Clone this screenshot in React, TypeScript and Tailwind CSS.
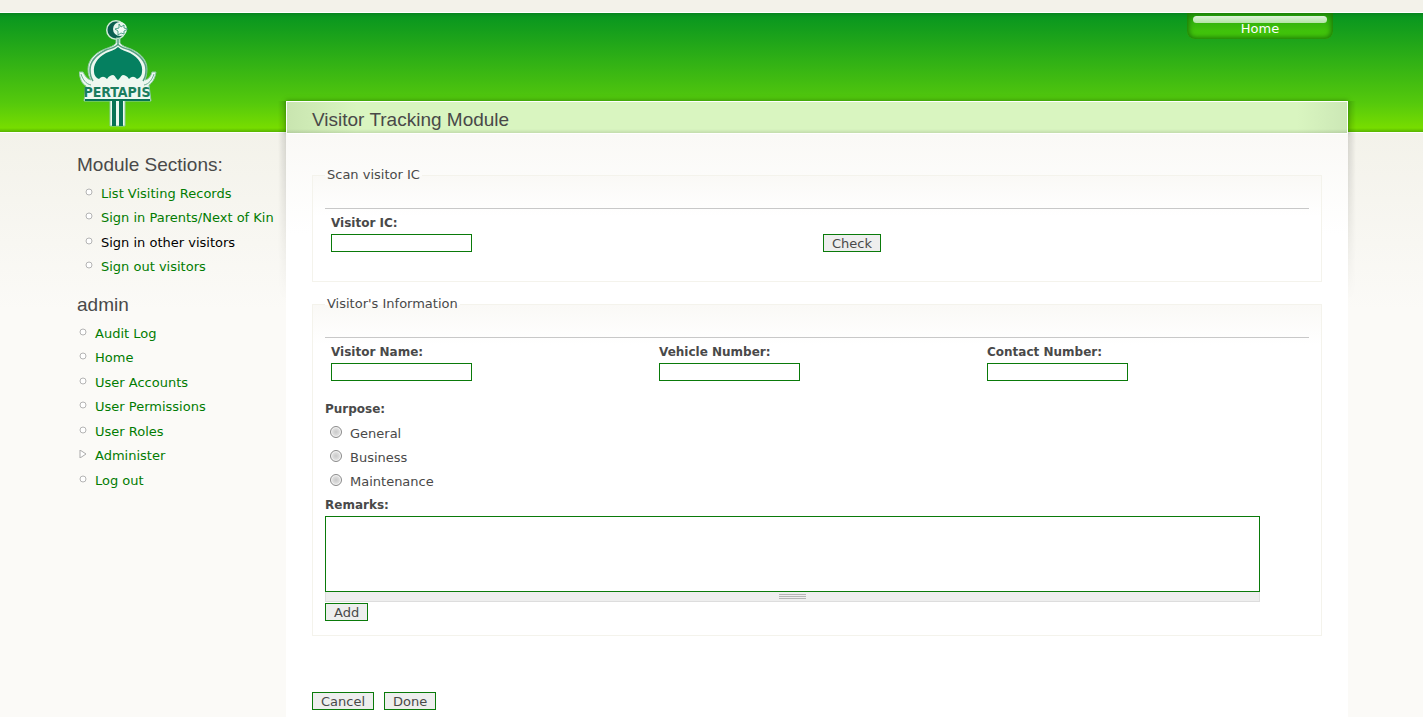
import type { ReactNode } from "react";

const sections = [
  { label: "List Visiting Records" },
  { label: "Sign in Parents/Next of Kin" },
  { label: "Sign in other visitors", active: true },
  { label: "Sign out visitors" },
];

const adminLinks = [
  { label: "Audit Log" },
  { label: "Home" },
  { label: "User Accounts" },
  { label: "User Permissions" },
  { label: "User Roles" },
  { label: "Administer", collapsed: true },
  { label: "Log out" },
];

const purposes = ["General", "Business", "Maintenance"];

type MenuItem = { label: string; active?: boolean; collapsed?: boolean };

const Logo = () => (
  <svg width="80" height="110" viewBox="0 0 80 110" role="img" aria-label="Pertapis">
    {/* crescent and star */}
    <circle cx="37" cy="11" r="10" fill="#d3ecd8" />
    <circle cx="37" cy="11" r="8.5" fill="#0b5f50" />
    <circle cx="41" cy="10" r="7" fill="#e8f6ee" />
    <path
      d="M40 5l2 3 3-2 0 3 4 1-4 2 0 3-3-1-3 2 0-4-3-2 4-1z"
      fill="#f4fbf7"
      stroke="#2b8f70"
      strokeWidth="0.8"
    />
    {/* outer dome, horns and stem */}
    <path
      d="M37 19h4v5c2 3 6 4 11 6c11 5 16 12 16 20c0 5-1 8-2 11c4-1 6-4 7-8h4c-1 7-4 11-7 13l2 16H46v25H31V82H5l2-15C3 65 1 60 0 53h4c2 4 4 7 8 8c-2-3-3-6-3-11c0-8 6-16 17-20c5-2 9-3 11-6z"
      fill="#eef8f0"
      stroke="#8cc9a2"
      strokeWidth="1"
    />
    {/* rim line around the dome */}
    <path
      d="M39 20v5c-2 4-7 4-12 6c-10 5-16 12-16 20c0 4 1 8 3 11M39 25c2 4 7 4 12 6c10 5 16 12 16 20c0 4-1 8-3 11"
      fill="none"
      stroke="#57a184"
      strokeWidth="1.500"
    />
    <path d="M2 55c2 6 5 10 10 11M75 55c-2 6-5 10-10 11" fill="none" stroke="#6bb092" strokeWidth="1" />
    <path
      d="M39 28c3 3 8 4 12 6c9 5 13 12 12 19c0 3-2 6-5 7c-3-3-5-3-8 0c-2-3-4-4-6-4c-2 0-3 4-5 5c-2-1-3-5-5-5c-2 0-4 1-6 4c-3-3-5-3-8 0c-3-1-5-4-5-7c-1-7 3-14 12-19c4-2 9-3 12-6z"
      fill="#058060"
    />
    <text
      x="38"
      y="78"
      textAnchor="middle"
      className="font-['Liberation_Sans_Narrow','DejaVu_Sans_Condensed',sans-serif] text-[14px] font-bold"
      fill="#1b7d5e"
    >
      PERTAPIS
    </text>
    <path d="M6 80h65v2H6z" fill="#087355" />
    <path d="M33 81h4v26h-4zM40 81h4v26h-4z" fill="#087355" />
  </svg>
);

const Bullet = ({ collapsed }: { collapsed?: boolean }) => (
  <svg width="8" height="8" viewBox="0 0 8 8" className="mb-1 shrink-0" aria-hidden="true">
    {collapsed ? (
      <path d="M1 0L7 4 1 8z" fill="#fff" stroke="#aaa" />
    ) : (
      <circle cx="4" cy="4" r="3" fill="#fff" stroke="#b4b4b4" />
    )}
  </svg>
);

const Menu = ({ items }: { items: MenuItem[] }) => (
  <ul>
    {items.map((item) => (
      <li key={item.label} className="flex items-center gap-2 odd:h-[25px] even:h-6">
        <Bullet collapsed={item.collapsed} />
        <a href="#" className={item.active ? "whitespace-nowrap text-black" : "whitespace-nowrap text-[#027c02]"}>
          {item.label}
        </a>
      </li>
    ))}
  </ul>
);

const Button = ({ children }: { children: ReactNode }) => (
  <button type="button" className="block h-[18px] border border-[#0a7a0a] bg-[#eee] px-2 pt-px leading-4">
    {children}
  </button>
);

const TextField = ({ id, label }: { id: string; label: string }) => (
  <div>
    <label htmlFor={id} className="mb-px block text-[12px] leading-5 font-bold">
      {label}
    </label>
    <input id={id} type="text" className="block h-[18px] w-[141px] border border-[#0a7a0a] bg-white px-1" />
  </div>
);

const Panel = ({ title, children }: { title: string; children: ReactNode }) => (
  <fieldset className="mb-3 border border-[#f4f3ec] bg-linear-to-b from-[#faf9f6] to-white to-[40px] px-3 pb-[14px]">
    <legend className="px-[2px] leading-5">{title}</legend>
    <div className="mt-[23px] border-t border-[#c8c8c8] pt-1">{children}</div>
  </fieldset>
);

const App = () => {
  return (
    <div className="min-h-screen overflow-hidden bg-[#fbfaf7] bg-[linear-gradient(to_bottom,#f3f2ea_12px,#ffffff_12px,#ffffff_13px,#07851f_13px,#0a971f_17px,#55c90c_103px,#77dd00_128px,#58b400_132px,#ffffff_132px,#ffffff_133px,#f3f2ea_133px,#fbfaf7_310px)] font-['DejaVu_Sans',sans-serif] text-[13px] text-[#494949]">
      <div className="mx-auto flex max-w-[1311px] pt-[13px] pr-[19px] pl-[21px]">
        <aside className="w-[209px] shrink-0">
          <a href="#" className="ml-[2px] block h-[120px] w-20 pt-[6px]">
            <Logo />
          </a>
          <h2 className="mt-5 mb-1 font-['Liberation_Sans',sans-serif] text-[19px] leading-6">Module Sections:</h2>
          <div className="pl-2">
            <Menu items={sections} />
          </div>
          <h2 className="mt-[14px] mb-1 font-['Liberation_Sans',sans-serif] text-[19px] leading-6">admin</h2>
          <div className="pl-[2px]">
            <Menu items={adminLinks} />
          </div>
        </aside>

        <div className="min-w-0 flex-1">
          <nav className="flex h-[88px] justify-end pr-[15px]">
            <a
              href="#"
              className="block h-[26px] w-[146px] rounded-b-lg bg-linear-to-b from-[#25a40d] to-[#4bd00a] px-[6px] pt-[3px] text-center text-white shadow-[inset_0_0_5px_2px_#1c7d08]"
            >
              <span className="block h-[7px] rounded-full bg-linear-to-b from-[#dcf3d8] to-[#b4e4a6]" />
              <span className="block leading-3">Home</span>
            </a>
          </nav>

          <main className="relative">
            {/* soft side shadows that fade out down the page */}
            <div className="absolute top-0 right-full h-[200px] w-2 bg-linear-to-l from-black/15 to-transparent mask-b-from-0% mask-b-to-100%" />
            <div className="absolute top-0 left-full h-[200px] w-2 bg-linear-to-r from-black/15 to-transparent mask-b-from-0% mask-b-to-100%" />

            <header className="h-8 border border-b-0 border-white bg-[linear-gradient(to_bottom,transparent_27px,#0000001a),linear-gradient(to_right,#c9e5b0,#d9f5c0_70px,#d9f5c0_calc(100%-50px),#cce8b6)] px-[25px] shadow-[0_-1px_4px_#2c7a0699]">
              <h1 className="font-['Liberation_Sans',sans-serif] text-[19px] leading-9">Visitor Tracking Module</h1>
            </header>

            <form className="border-t border-white bg-white bg-linear-to-b from-[#faf9f6] to-white to-[100px] px-[26px] pt-[31px] pb-8">
              <Panel title="Scan visitor IC">
                <div className="grid grid-cols-2 items-end pb-[15px]">
                  <div className="pl-[6px]">
                    <TextField id="visitor-ic" label="Visitor IC:" />
                  </div>
                  <div className="pl-[6px]">
                    <Button>Check</Button>
                  </div>
                </div>
              </Panel>

              <Panel title="Visitor's Information">
                <div className="-mr-[6px] grid grid-cols-3 pl-[6px]">
                  <TextField id="visitor-name" label="Visitor Name:" />
                  <TextField id="vehicle-number" label="Vehicle Number:" />
                  <TextField id="contact-number" label="Contact Number:" />
                </div>

                <div role="radiogroup" aria-labelledby="purpose" className="mt-[18px]">
                  <div id="purpose" className="mb-[3px] text-[12px] leading-5 font-bold">
                    Purpose:
                  </div>
                  {purposes.map((purpose) => (
                    <label key={purpose} className="flex h-6 items-center gap-2 pl-[5px]">
                      <input
                        type="radio"
                        name="purpose"
                        className="mb-1 size-3 appearance-none rounded-full border border-[#8b8b8b] bg-radial from-[#c9c9c9] to-[#f4f4f4] shadow-[inset_0_0_0_1px_#f4f4f4] checked:from-[#333]"
                      />
                      {purpose}
                    </label>
                  ))}
                </div>

                <label htmlFor="remarks" className="mt-px mb-px block text-[12px] leading-5 font-bold">
                  Remarks:
                </label>
                <div className="mb-px w-[95%]">
                  <textarea id="remarks" className="block h-[76px] w-full resize-none border border-[#0a7a0a] bg-white p-1" />
                  <div className="flex h-[10px] flex-col items-center gap-px border border-t-0 border-[#ddd] bg-[#eee] pt-[2px]">
                    <span className="h-px w-[27px] bg-[#b5b5b5]" />
                    <span className="h-px w-[27px] bg-[#b5b5b5]" />
                    <span className="h-px w-[27px] bg-[#b5b5b5]" />
                  </div>
                </div>
                <Button>Add</Button>
              </Panel>

              <div className="mt-14 flex gap-[10px]">
                <Button>Cancel</Button>
                <Button>Done</Button>
              </div>
            </form>
          </main>
        </div>
      </div>
    </div>
  );
};

export default App;
